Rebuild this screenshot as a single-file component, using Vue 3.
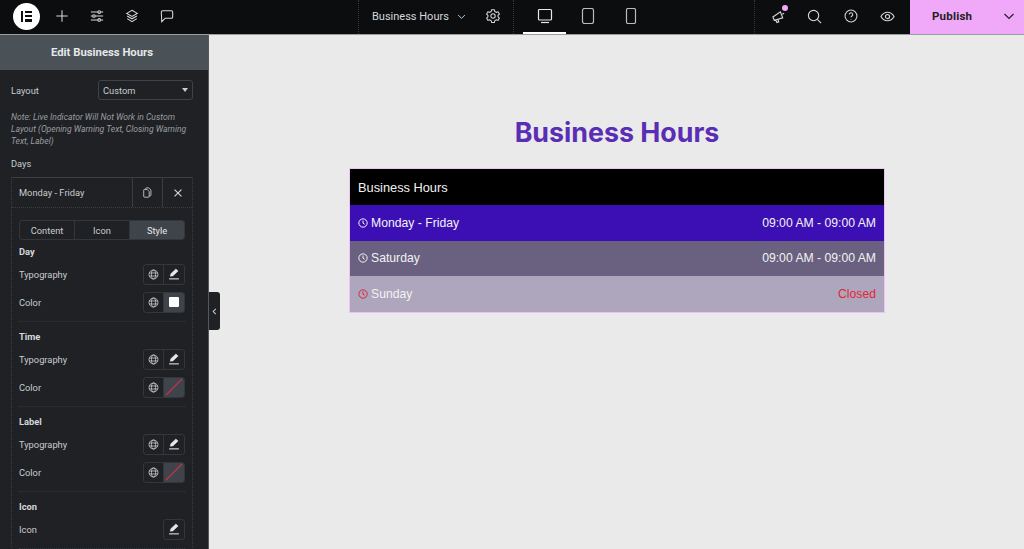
<template>
  <div class="editor">
    <header class="topbar">
      <div class="tb-left">
        <div class="logo"><span class="logo-bar"></span><span class="logo-lines"><i></i><i></i><i></i></span></div>
        <button class="tb-btn">
          <svg viewBox="0 0 16 16" width="14" height="14"><path d="M8 1.500v13M1.500 8h13" /></svg>
        </button>
        <button class="tb-btn">
          <svg viewBox="0 0 16 16" width="14" height="14"><path d="M1 3.500h8M12 3.500h3M1 8h2M6 8h9M1 12.500h8M12 12.500h3" /><circle cx="10.500" cy="3.500" r="1.500" /><circle cx="4.500" cy="8" r="1.500" /><circle cx="10.500" cy="12.500" r="1.500" /></svg>
        </button>
        <button class="tb-btn">
          <svg viewBox="0 0 16 16" width="14" height="14"><path d="M8 1.500 14 5 8 8.500 2 5zM2.500 8 8 11.200 13.500 8M2.500 11 8 14.400 13.500 11" /></svg>
        </button>
        <button class="tb-btn">
          <svg viewBox="0 0 16 16" width="14" height="14"><path d="M3 2h10a1.500 1.500 0 0 1 1.500 1.500V9A1.500 1.500 0 0 1 13 10.500H6l-4 4-.5-11A1.500 1.500 0 0 1 3 2z" /></svg>
        </button>
      </div>
      <div class="tb-title">
        <span class="doc-name">Business Hours</span>
        <svg class="chev" viewBox="0 0 12 12" width="9" height="9"><path d="M1.500 4 6 8.500 10.500 4" /></svg>
        <svg class="gear" viewBox="0 0 16 16" width="14" height="14"><path d="M6.500 1.200h3l.5 2 1.800 1 2-.6 1.500 2.600-1.500 1.400v1.800l1.500 1.400-1.500 2.600-2-.6-1.800 1-.5 2h-3l-.5-2-1.800-1-2 .6L.7 10.800l1.500-1.400V7.600L.7 6.200l1.500-2.600 2 .6 1.800-1z" transform="translate(0 -.4)" /><circle cx="8" cy="8" r="2.500" /></svg>
      </div>
      <div class="tb-devices">
        <button class="device active">
          <svg viewBox="0 0 16 16" width="16" height="16"><rect x="1.500" y="1.500" width="13" height="10.500" rx="1" /><path d="M4 14.500h8" /></svg>
        </button>
        <button class="device">
          <svg viewBox="0 0 16 16" width="16" height="16"><rect x="2.500" y=".5" width="11" height="15" rx="2" /></svg>
        </button>
        <button class="device">
          <svg viewBox="0 0 16 16" width="16" height="16"><rect x="3.500" y=".5" width="9" height="15" rx="1.500" /></svg>
        </button>
      </div>
      <div class="tb-right">
        <button class="tb-btn tools">
          <svg viewBox="0 0 16 16" width="15" height="15"><path d="M2 8.500 10 3l2.500 6.500-9 2.500zM5 11.500l1.300 3 2-.8-1-2.800M12 5.500l2-1" /></svg>
          <span class="dot"></span>
        </button>
        <button class="tb-btn tools">
          <svg viewBox="0 0 16 16" width="15" height="15"><circle cx="7" cy="7" r="5.500" /><path d="m11 11 4 4" /></svg>
        </button>
        <button class="tb-btn tools">
          <svg viewBox="0 0 16 16" width="14" height="14"><circle cx="8" cy="8" r="6.800" /><path d="M6 6.300a2 2 0 1 1 3 1.700c-.7.400-1 .8-1 1.500M8 11.300v.7" /></svg>
        </button>
        <button class="tb-btn tools">
          <svg viewBox="0 0 16 16" width="15" height="15"><path d="M1 8c1.700-3 4-4.500 7-4.500S13.300 5 15 8c-1.700 3-4 4.500-7 4.500S2.700 11 1 8z" /><circle cx="8" cy="8" r="2.200" /></svg>
        </button>
      </div>
      <div class="publish">
        <span class="publish-label">Publish</span>
        <svg viewBox="0 0 12 12" width="12" height="12"><path d="M1.500 4 6 8.500 10.500 4" /></svg>
      </div>
    </header>

    <div class="body">
      <aside class="panel">
        <div class="panel-head">Edit Business Hours</div>
        <div class="panel-scroll">
          <div class="layout-row">
            <span>Layout</span>
            <div class="select"><span>Custom</span><i class="caret"></i></div>
          </div>
          <p class="note">Note: Live Indicator Will Not Work in Custom Layout (Opening Warning Text, Closing Warning Text, Label)</p>
          <div class="days-label">Days</div>
          <div class="repeater">
            <div class="rep-head">
              <span class="rep-title">Monday - Friday</span>
              <button class="rep-btn">
                <svg viewBox="0 0 16 16" width="11" height="11"><path d="M5.500 3.500V2.200c0-.6.400-1 1-1h3.200L13 4.500v7.300c0 .6-.4 1-1 1h-1.500M3.500 3.500h4l3 3v7.300c0 .6-.4 1-1 1h-6c-.6 0-1-.4-1-1V4.500c0-.6.400-1 1-1z" /></svg>
              </button>
              <button class="rep-btn">
                <svg class="x" viewBox="0 0 16 16" width="10" height="10"><path d="m2.500 2.500 11 11M13.500 2.500l-11 11" /></svg>
              </button>
            </div>
            <div class="rep-body">
              <div class="tabs">
                <span v-for="tab in tabs" :key="tab" class="tab" :class="{ on: tab === 'Style' }">{{ tab }}</span>
              </div>
              <section v-for="group in groups" :key="group.name" class="group">
                <div class="group-name">{{ group.name }}</div>
                <div v-for="row in group.rows" :key="row.label" class="ctrl">
                  <span>{{ row.label }}</span>
                  <div class="ctrl-btns">
                    <span v-if="row.kind !== 'icon'" class="cbtn">
                      <svg viewBox="0 0 16 16" width="11" height="11"><circle cx="8" cy="8" r="6.500" /><ellipse cx="8" cy="8" rx="3" ry="6.500" /><path d="M1.800 5.800h12.400M1.800 10.200h12.400" /></svg>
                    </span>
                    <span v-if="row.kind === 'type' || row.kind === 'icon'" class="cbtn">
                      <svg class="pen" viewBox="0 0 16 16" width="12" height="12"><path class="pen-tip" d="m3 11 .7-3.200L10.500 1.200 13.500 4 6.500 10.500z" /><path d="M1.500 14.500h13" /></svg>
                    </span>
                    <span v-else-if="row.kind === 'white'" class="cbtn filled"><i class="swatch"></i></span>
                    <span v-else class="cbtn filled">
                      <svg class="none" viewBox="0 0 18 18" width="18" height="18"><path d="M1 17 17 1" /></svg>
                    </span>
                  </div>
                </div>
              </section>
            </div>
          </div>
        </div>
      </aside>
      <button class="collapse">
        <svg viewBox="0 0 8 8" width="7" height="7"><path d="M5.500 1 2.500 4l3 3" /></svg>
      </button>

      <main class="canvas">
        <h1 class="heading">Business Hours</h1>
        <div class="hours">
          <div class="hours-title">Business Hours</div>
          <div v-for="d in days" :key="d.day" class="hours-row" :class="d.cls">
            <span class="day">
              <svg viewBox="0 0 12 12" width="10" height="10"><circle cx="6" cy="6" r="5" /><path d="M6 3v3.200l2 1.300" /></svg>
              {{ d.day }}
            </span>
            <span class="time">{{ d.time }}</span>
          </div>
        </div>
      </main>
    </div>
  </div>
</template>

<script setup>
const tabs = ['Content', 'Icon', 'Style']

const groups = [
  { name: 'Day', rows: [{ label: 'Typography', kind: 'type' }, { label: 'Color', kind: 'white' }] },
  { name: 'Time', rows: [{ label: 'Typography', kind: 'type' }, { label: 'Color', kind: 'none' }] },
  { name: 'Label', rows: [{ label: 'Typography', kind: 'type' }, { label: 'Color', kind: 'none' }] },
  { name: 'Icon', rows: [{ label: 'Icon', kind: 'icon' }] },
]

const days = [
  { day: 'Monday - Friday', time: '09:00 AM - 09:00 AM', cls: 'r1' },
  { day: 'Saturday', time: '09:00 AM - 09:00 AM', cls: 'r2' },
  { day: 'Sunday', time: 'Closed', cls: 'r3' },
]
</script>

<style>
html, body { margin: 0; height: 100%; overflow: hidden; }
</style>

<style scoped>
.editor { width: 1024px; height: 549px; display: flex; flex-direction: column; overflow: hidden; background: #eaeaea; font-family: Roboto, "Liberation Sans", sans-serif; }
button { background: none; border: none; padding: 0; color: inherit; cursor: pointer; }
svg { fill: none; stroke: currentColor; stroke-width: 1.200; display: block; }

.topbar { height: 34px; flex: none; display: flex; background: #0c0d0e; color: #d5d8dc; border-bottom: 1px solid #9a9ca0; }
.tb-left { width: 358px; display: flex; align-items: center; padding: 0 0 2px 13px; box-sizing: border-box; }
.logo { width: 27px; height: 27px; border-radius: 50%; background: #fff; display: flex; align-items: center; justify-content: center; gap: 2px; margin-right: 4px; }
.logo-bar { width: 2.500px; height: 11px; background: #0c0d0e; }
.logo-lines { display: flex; flex-direction: column; justify-content: space-between; height: 11px; }
.logo-lines i { display: block; width: 7px; height: 2.200px; background: #0c0d0e; }
.tb-btn { width: 35px; height: 32px; display: flex; align-items: center; justify-content: center; flex: none; position: relative; }
.tb-title { width: 156px; display: flex; align-items: center; padding: 0 0 2px 13px; box-sizing: border-box; border-left: 1px dotted #33363b; border-right: 1px dotted #33363b; }
.doc-name { font-size: 11px; width: 85px; white-space: nowrap; }
.chev { margin-right: 20px; }
.tb-devices { width: 241px; display: flex; padding-left: 9px; box-sizing: border-box; border-right: 1px dotted #33363b; }
.device { width: 43px; height: 34px; padding-bottom: 2px; display: flex; align-items: center; justify-content: center; color: #b8bbc0; }
.device.active { color: #e6e8ea; box-shadow: inset 0 -2px 0 #fff; }
.tb-right { width: 155px; display: flex; align-items: center; padding: 0 0 2px 5px; box-sizing: border-box; }
.tb-right .tools { width: 36.500px; }
.dot { position: absolute; width: 6px; height: 6px; border-radius: 50%; background: #f0a8f8; top: 5px; right: 9px; }
.publish { flex: 1; background: #f0a9f9; color: #1f2124; display: flex; align-items: center; justify-content: space-between; padding: 0 9px 2px 22px; }
.publish-label { font-size: 11.500px; font-weight: 700; letter-spacing: 0.2px; }

.body { flex: 1; display: flex; min-height: 0; position: relative; }
.panel { width: 209px; flex: none; background: #1f2124; color: #c8ccd0; border-right: 1px solid #55585c; box-sizing: border-box; display: flex; flex-direction: column; overflow: hidden; font-size: 9.300px; }
.panel-head { height: 35px; flex: none; padding-right: 4px; background: #4a5157; color: #e6e8ea; font-size: 11.300px; font-weight: 700; display: flex; align-items: center; justify-content: center; }
.panel-scroll { padding: 10px 15px 0 11px; }
.layout-row { display: flex; align-items: center; justify-content: space-between; height: 20px; }
.select { width: 95px; height: 20px; box-sizing: border-box; border: 1px solid #3f444b; border-radius: 3px; display: flex; align-items: center; justify-content: space-between; padding: 0 4px; }
.caret { width: 0; height: 0; border-left: 3.500px solid transparent; border-right: 3.500px solid transparent; border-top: 4px solid #c8ccd0; }
.note { margin: 11px 0 0; font-size: 8.600px; line-height: 12px; font-style: italic; color: #9a9da1; }
.days-label { margin-top: 11px; height: 12px; line-height: 12px; }
.repeater { margin-top: 7px; border: 1px dotted #3a3d42; border-top-style: solid; }
.rep-head { display: flex; height: 30px; box-sizing: border-box; align-items: center; border-bottom: 1px dotted #3a3d42; }
.rep-title { flex: 1; padding-left: 7px; }
.rep-btn { width: 30px; height: 29px; display: flex; align-items: center; justify-content: center; border-left: 1px solid #3a3d42; box-sizing: border-box; color: #d5d8dc; }
.x { stroke-width: 1.800; }
.rep-body { padding: 12px 7px 0; }
.tabs { display: flex; height: 20px; border: 1px solid #33363b; border-radius: 3px; box-sizing: border-box; }
.tab { flex: 1; display: flex; align-items: center; justify-content: center; border-right: 1px solid #33363b; }
.tab:last-child { border-right: none; }
.tab.on { background: #3f444b; color: #e6e8ea; border-radius: 0 2px 2px 0; }
.group { padding-top: 5px; padding-bottom: 5px; border-bottom: 1px dotted #33363b; }
.group-name { font-weight: 700; color: #d5d8dc; height: 13px; line-height: 13px; margin-bottom: 2px; }
.group + .group { padding-top: 8px; }
.ctrl { display: flex; align-items: center; justify-content: space-between; height: 28px; }
.ctrl-btns { display: flex; border: 1px solid #33363b; border-radius: 3px; height: 21px; box-sizing: border-box; }
.cbtn { width: 20px; box-sizing: border-box; display: flex; align-items: center; justify-content: center; border-right: 1px solid #33363b; color: #c8ccd0; }
.cbtn:last-child { border-right: none; }
.pen { color: #e6e8ea; stroke-width: 1.400; }
.pen-tip { fill: currentColor; stroke-width: .6; }
.cbtn.filled { background: #3f444b; border-radius: 0 2px 2px 0; }
.swatch { width: 10px; height: 10px; background: #fff; border-radius: 1px; }
.none { color: #c2314a; }

.collapse { position: absolute; left: 209px; top: 257px; width: 11px; height: 38px; background: #1f2124; color: #c8ccd0; border-radius: 0 3px 3px 0; display: flex; align-items: center; justify-content: center; }

.canvas { flex: 1; display: flex; flex-direction: column; align-items: center; padding-left: 1px; }
.heading { margin: 80px 0 0; height: 34px; line-height: 34px; font-family: Inter, "Liberation Sans", sans-serif; font-size: 26.800px; font-weight: 700; color: #5a2eb4; }
.hours { margin-top: 19px; width: 536px; box-sizing: border-box; border: 1px solid #f0c0f8; font-family: "Liberation Sans", sans-serif; font-size: 12.200px; color: #f2f2f2; }
.hours-title { height: 36px; background: #000; display: flex; align-items: center; padding-left: 8px; font-size: 12.800px; }
.hours-row { height: 35.500px; display: flex; align-items: center; justify-content: space-between; padding: 0 8px; }
.day { display: flex; align-items: center; gap: 3px; }
.r1 { background: #3c0fb4; }
.r2 { background: #69617f; }
.r3 { background: #ada6bc; }
.r3 svg { color: #d9263c; }
.r3 .time { color: #e32636; }
</style>
